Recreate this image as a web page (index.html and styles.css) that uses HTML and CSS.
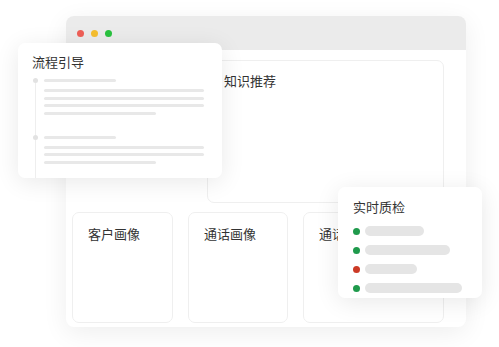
FILE: index.html
```html
<!DOCTYPE html>
<html lang="zh-CN">
<head>
  <meta charset="UTF-8">
  <title>坐席助手</title>
  <link rel="stylesheet" href="styles.css">
</head>
<body>

  <div class="stage">

    <div class="window">
      <div class="titlebar">
        <span class="dot red"></span>
        <span class="dot yellow"></span>
        <span class="dot green"></span>
      </div>
      <div class="window-body">
        <div class="top-row">
          <div class="panel knowledge">
            <div class="panel-title">知识推荐</div>
          </div>
        </div>
        <div class="bottom-row">
          <div class="panel">
            <div class="panel-title">客户画像</div>
          </div>
          <div class="panel">
            <div class="panel-title">通话画像</div>
          </div>
          <div class="panel">
            <div class="panel-title">通话摘要</div>
          </div>
        </div>
      </div>
    </div>

    <div class="float-card flow-card">
      <div class="card-title">流程引导</div>
      <div class="timeline">
        <div class="step">
          <div class="bar head"></div>
          <div class="bar"></div>
          <div class="bar"></div>
          <div class="bar"></div>
          <div class="bar short"></div>
        </div>
        <div class="step">
          <div class="bar head"></div>
          <div class="bar"></div>
          <div class="bar"></div>
          <div class="bar short"></div>
        </div>
      </div>
    </div>

    <div class="float-card qc-card">
      <div class="card-title">实时质检</div>
      <ul class="qc-list">
        <li><span class="status ok"></span><span class="pill" style="width: 59px"></span></li>
        <li><span class="status ok"></span><span class="pill" style="width: 85px"></span></li>
        <li><span class="status bad"></span><span class="pill" style="width: 52px"></span></li>
        <li><span class="status ok"></span><span class="pill" style="width: 97px"></span></li>
      </ul>
    </div>

  </div>

</body>
</html>
```

FILE: styles.css
```css
* {
  box-sizing: border-box;
}

body {
  margin: 0;
  background: #ffffff;
  font-family: "Noto Sans CJK SC", "Noto Sans", sans-serif;
  color: #333333;
}

.stage {
  position: relative;
  width: 499px;
  height: 347px;
  padding: 16px 0 0 66px;
}

/* main window */
.window {
  width: 400px;
  height: 311px;
  background: #ffffff;
  border-radius: 8px;
  box-shadow: 0 6px 26px rgba(0, 0, 0, 0.07);
  overflow: hidden;
}

.titlebar {
  height: 34px;
  background: #ebebeb;
  display: flex;
  align-items: center;
  gap: 7px;
  padding-left: 11px;
}

.dot {
  width: 7px;
  height: 7px;
  border-radius: 50%;
}

.red { background: #ee5f57; }
.yellow { background: #f5be2f; }
.green { background: #2ac23f; }

.window-body {
  padding: 10px 22px 4px 6px;
  display: flex;
  flex-direction: column;
  gap: 9px;
}

.top-row {
  display: flex;
  justify-content: flex-end;
}

.panel {
  border: 1px solid #efefef;
  border-radius: 7px;
  padding: 10px 15px;
}

.panel-title {
  font-size: 13px;
  line-height: 20px;
}

.knowledge {
  width: 237px;
  height: 143px;
  padding-left: 16px;
}

.bottom-row {
  display: grid;
  grid-template-columns: 101px 100px 141px;
  column-gap: 15px;
  height: 111px;
}

.bottom-row .panel {
  padding-top: 11px;
}

/* floating cards */
.float-card {
  position: absolute;
  background: #ffffff;
  border-radius: 7px;
  box-shadow: 0 4px 24px rgba(0, 0, 0, 0.09);
}

.card-title {
  font-size: 13px;
  line-height: 20px;
}

.flow-card {
  left: 18px;
  top: 43px;
  width: 204px;
  height: 135px;
  padding: 9px 0 0 14px;
}

.timeline {
  margin-top: 7px;
  margin-left: 3px;
  border-left: 1px solid #eeeeee;
  height: 99px;
  display: flex;
  flex-direction: column;
  gap: 21px;
}

.step {
  position: relative;
  padding-left: 8px;
  display: flex;
  flex-direction: column;
  gap: 4.5px;
}

.step::before {
  content: "";
  position: absolute;
  left: -3px;
  top: -1px;
  width: 5px;
  height: 5px;
  border-radius: 50%;
  background: #e2e2e2;
}

.bar {
  width: 160px;
  height: 3px;
  background: #e8e8e8;
  border-radius: 2px;
}

.bar.head {
  width: 72px;
  margin-bottom: 2.5px;
}

.bar.short {
  width: 112px;
}

.qc-card {
  left: 338px;
  top: 187px;
  width: 144px;
  height: 111px;
  padding: 10px 0 0 15px;
}

.qc-list {
  list-style: none;
  margin: 9px 0 0 0;
  padding: 0;
  display: flex;
  flex-direction: column;
  gap: 9px;
}

.qc-list li {
  display: flex;
  align-items: center;
  gap: 5px;
  height: 10px;
}

.status {
  width: 7px;
  height: 7px;
  border-radius: 50%;
}

.status.ok { background: #1f9a4c; }
.status.bad { background: #cc3a26; }

.pill {
  height: 10px;
  background: #e5e5e5;
  border-radius: 5px;
}
```
